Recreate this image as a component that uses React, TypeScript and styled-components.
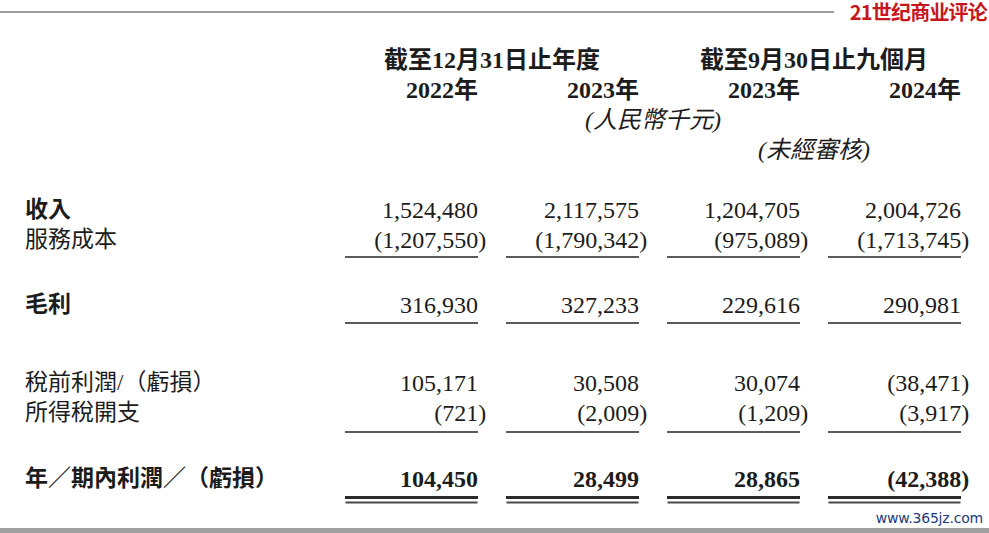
import React from 'react';
import styled, { createGlobalStyle } from 'styled-components';

const GlobalStyle = createGlobalStyle`
  html, body {
    margin: 0;
    padding: 0;
    background: #fff;
  }
  body {
    width: 989px;
    height: 533px;
    overflow: hidden;
  }
`;

const COLUMNS = '292px repeat(4, 133px)';

const Page = styled.div`
  width: 989px;
  height: 533px;
  display: flex;
  flex-direction: column;
  overflow: hidden;
  color: #1c1c1c;
  font-family: 'Liberation Serif', 'Noto Sans CJK TC', serif;
`;

const TopBar = styled.div`
  display: flex;
  align-items: center;
  height: 24px;
`;

const TopRule = styled.div`
  flex: 1;
  height: 2px;
  background: #9c9c9c;
  margin-right: 16px;
`;

const Logo = styled.div`
  font-family: 'Noto Sans CJK SC', sans-serif;
  font-weight: 700;
  font-size: 20px;
  line-height: 24px;
  color: #c8161e;
  white-space: nowrap;
  margin-right: 2px;
  letter-spacing: -0.8px;
`;

const Table = styled.div`
  display: flex;
  flex-direction: column;
  padding-left: 25px;
  margin-top: 21px;
`;

const Row = styled.div<{ $gap?: number; $bold?: boolean; $italic?: boolean }>`
  display: grid;
  grid-template-columns: ${COLUMNS};
  column-gap: 28px;
  height: 30px;
  line-height: 30px;
  font-size: 24px;
  margin-top: ${(p) => p.$gap ?? 0}px;
  font-weight: ${(p) => (p.$bold ? 700 : 400)};
  font-style: ${(p) => (p.$italic ? 'italic' : 'normal')};
  white-space: nowrap;
`;

const Label = styled.div<{ $bold?: boolean }>`
  font-family: 'Liberation Serif', 'Noto Sans CJK TC', sans-serif;
  font-size: 23px;
  font-weight: ${(p) => (p.$bold ? 700 : 400)};
  letter-spacing: 0;
`;

const Cell = styled.div`
  text-align: right;
`;

const Span = styled.div<{ $from: number; $span: number }>`
  grid-column: ${(p) => p.$from} / span ${(p) => p.$span};
  text-align: center;
`;

const Hang = styled.span`
  margin-right: -0.34em;
`;

const RuleRow = styled.div<{ $gap: number }>`
  display: grid;
  grid-template-columns: ${COLUMNS};
  column-gap: 28px;
  margin-top: ${(p) => p.$gap}px;
`;

const Rule = styled.div<{ $double?: boolean }>`
  height: 2px;
  background: #5a5a5a;
  ${(p) =>
    p.$double &&
    `
    height: 3px;
    background: #2a2a2a;
    box-shadow: 0 5px 0 -0.5px #4a4a4a;
  `}
`;

const Footer = styled.div`
  margin-top: auto;
  display: flex;
  flex-direction: column;
`;

const Site = styled.div`
  align-self: flex-end;
  margin-right: 6px;
  font-family: 'DejaVu Sans', sans-serif;
  font-size: 14px;
  line-height: 18px;
  color: #1d3a7a;
  letter-spacing: -0.2px;
`;

const BottomBar = styled.div`
  height: 5px;
  margin-top: 1px;
  background: #a0a0a0;
`;

const Amount = ({ v }: { v: string }) =>
  v.startsWith('(') ? (
    <>
      {v.slice(0, -1)}
      <Hang>)</Hang>
    </>
  ) : (
    <>{v}</>
  );

type Line = { label: string; boldLabel?: boolean; boldValues?: boolean; values: string[] };

const DataRow = ({ line, gap }: { line: Line; gap?: number }) => (
  <Row $gap={gap} $bold={line.boldValues}>
    <Label $bold={line.boldLabel}>{line.label}</Label>
    {line.values.map((v, i) => (
      <Cell key={i}>
        <Amount v={v} />
      </Cell>
    ))}
  </Row>
);

const Rules = ({ gap, double }: { gap: number; double?: boolean }) => (
  <RuleRow $gap={gap}>
    <div />
    {[0, 1, 2, 3].map((i) => (
      <Rule key={i} $double={double} />
    ))}
  </RuleRow>
);

const revenue: Line = { label: '收入', boldLabel: true, values: ['1,524,480', '2,117,575', '1,204,705', '2,004,726'] };
const cost: Line = { label: '服務成本', values: ['(1,207,550)', '(1,790,342)', '(975,089)', '(1,713,745)'] };
const gross: Line = { label: '毛利', boldLabel: true, values: ['316,930', '327,233', '229,616', '290,981'] };
const pretax: Line = { label: '稅前利潤/（虧損）', values: ['105,171', '30,508', '30,074', '(38,471)'] };
const tax: Line = { label: '所得稅開支', values: ['(721)', '(2,009)', '(1,209)', '(3,917)'] };
const net: Line = {
  label: '年／期內利潤／（虧損）',
  boldLabel: true,
  boldValues: true,
  values: ['104,450', '28,499', '28,865', '(42,388)'],
};

export default function App() {
  return (
    <>
      <GlobalStyle />
      <Page>
        <TopBar>
          <TopRule />
          <Logo>21世纪商业评论</Logo>
        </TopBar>
        <Table>
          <Row $bold>
            <div />
            <Span $from={2} $span={2}>截至12月31日止年度</Span>
            <Span $from={4} $span={2}>截至9月30日止九個月</Span>
          </Row>
          <Row $bold>
            <div />
            <Cell>2022年</Cell>
            <Cell>2023年</Cell>
            <Cell>2023年</Cell>
            <Cell>2024年</Cell>
          </Row>
          <Row $italic>
            <div />
            <Span $from={2} $span={4}>(人民幣千元)</Span>
          </Row>
          <Row $italic>
            <div />
            <Span $from={4} $span={2}>(未經審核)</Span>
          </Row>

          <DataRow line={revenue} gap={30} />
          <DataRow line={cost} />
          <Rules gap={1} />

          <DataRow line={gross} gap={32} />
          <Rules gap={2} />

          <DataRow line={pretax} gap={44} />
          <DataRow line={tax} />
          <Rules gap={3} />

          <DataRow line={net} gap={31} />
          <Rules gap={2} double />
        </Table>
        <Footer>
          <Site>www.365jz.com</Site>
          <BottomBar />
        </Footer>
      </Page>
    </>
  );
}
